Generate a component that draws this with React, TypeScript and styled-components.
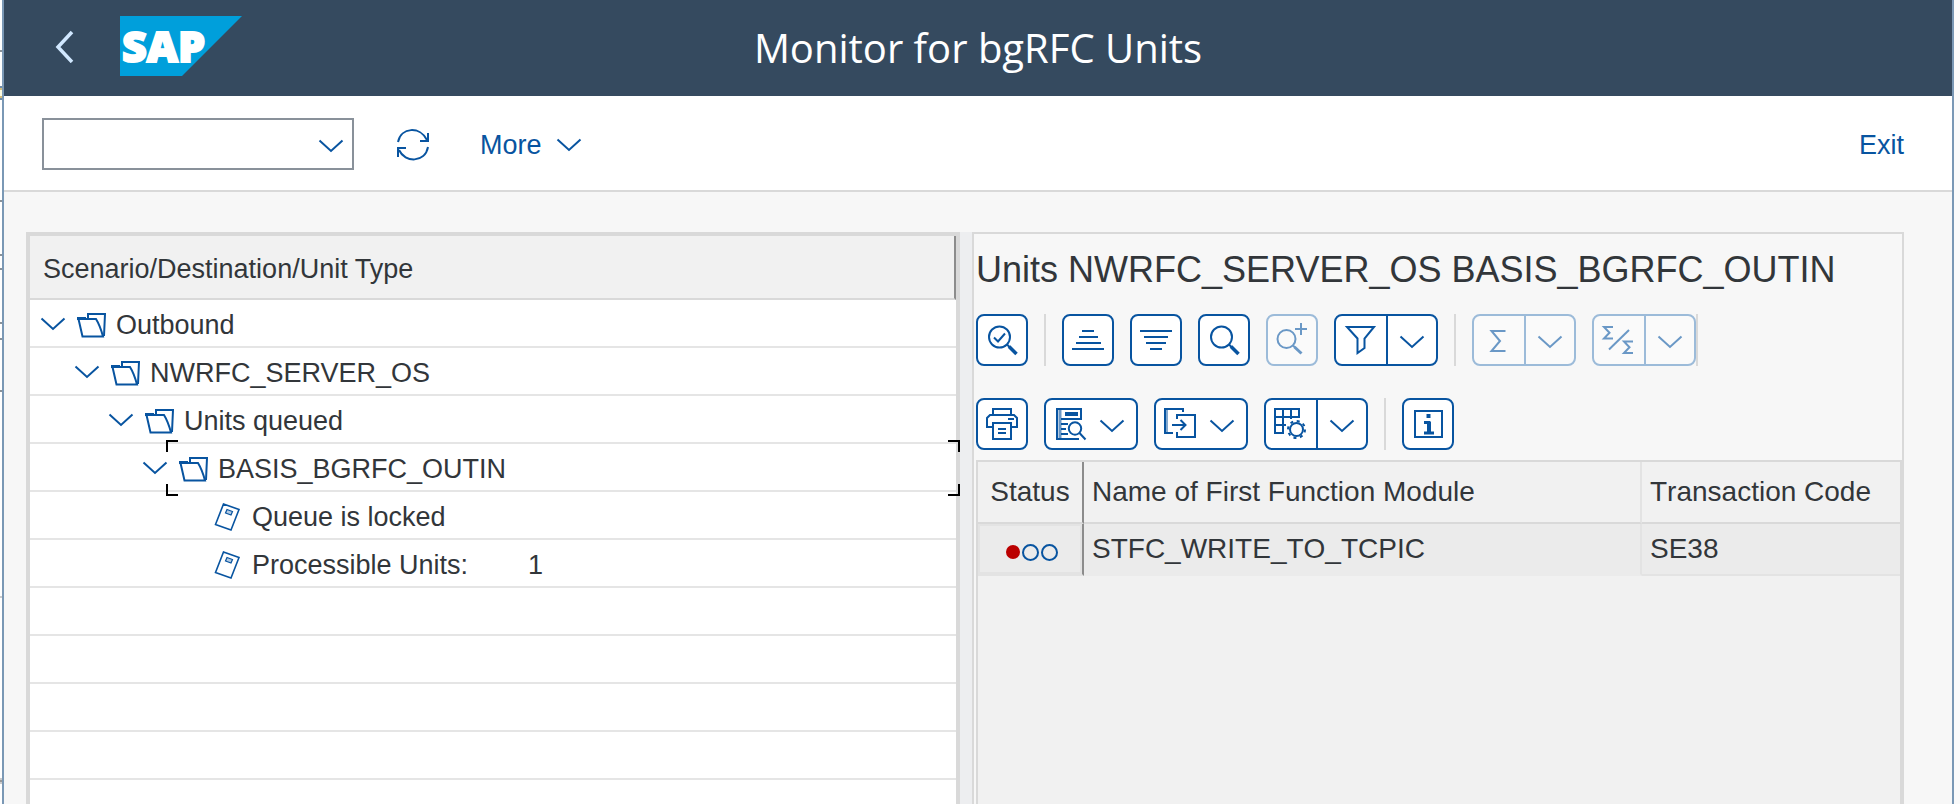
import React, { ReactNode } from 'react';
import styled, { createGlobalStyle } from 'styled-components';

const color = {
  shell: '#354a5f',
  link: '#0854a0',
  text: '#32363a',
  page: '#f7f7f7',
  line: '#d9d9d9',
  rowLine: '#e5e5e5',
  cellLine: '#e3e3e3',
  strongLine: '#8c8c8c',
  windowEdge: '#7a98b5',
  disabledEdge: '#9cbbd9',
  disabledIcon: '#6a98c6',
};

const GlobalStyle = createGlobalStyle`
  * { box-sizing: border-box; }
  body {
    margin: 0;
    background: #fafafa;
    color: ${color.text};
    font-family: "Liberation Sans", Arial, sans-serif;
  }
  button {
    margin: 0;
    padding: 0;
    border: 0;
    background: none;
    color: inherit;
    font: inherit;
    cursor: pointer;
  }
  svg { display: block; flex: none; }
`;

/* ---------- window frame ---------- */

/* A sliver of the window underneath stays visible along the left edge. */
const Desktop = styled.div`
  display: flex;
  height: 100vh;
  padding: 0 6px 0 2px;
  overflow: hidden;
  background:
    linear-gradient(
        #fff 50px, #8a9299 50px 52px, #fff 52px 86px, #6f8ba6 86px 88px, #d3bd7c 88px 90px,
        #fdfbe0 90px 96px, #d3bd7c 96px 98px, #6f8ba6 98px 100px, #fff 100px 200px,
        #8a9299 200px 202px, #fff 202px 254px, #8a9299 254px 256px, #fff 256px 268px,
        #8a9299 268px 270px, #fff 270px 322px, #8a9299 322px 324px, #fff 324px 338px,
        #8a9299 338px 340px, #fff 340px 390px, #8a9299 390px 392px, #fff 392px 596px,
        #ccc 596px 598px, #fff 598px 778px, #ccc 778px 780px, #999 780px 782px,
        #ccc 782px 784px, #fff 784px
      )
      left / 2px 100% no-repeat,
    #fafafa;
`;

const AppWindow = styled.div`
  flex: 1;
  min-width: 0;
  display: flex;
  flex-direction: column;
  border: solid ${color.windowEdge};
  border-width: 0 2px;
  background: ${color.page};
`;

const ShellBar = styled.header`
  flex: none;
  display: grid;
  grid-template-columns: 1fr auto 1fr;
  align-items: center;
  height: 96px;
  padding: 0 48px;
  background: ${color.shell};
  color: #fff;
`;

const ShellStart = styled.div`
  display: flex;
  align-items: center;
  gap: 44px;
  padding-bottom: 4px;
`;

const BackButton = styled.button`
  display: flex;
  color: #d1e8ff;
`;

const ShellTitle = styled.h1`
  margin: 0;
  font: 400 40px/56px "Open Sans", "Noto Sans", sans-serif;
  white-space: nowrap;
`;

const LogoText = styled.text`
  fill: #fff;
  stroke: #fff;
  stroke-width: 2px;
  font: 800 43px "Open Sans", sans-serif;
`;

/* ---------- menu bar ---------- */

const MenuBar = styled.nav`
  flex: none;
  display: flex;
  align-items: center;
  padding: 22px 48px 20px 38px;
  border-bottom: 2px solid ${color.line};
  background: #fff;
  color: ${color.link};
  font-size: 27px;
  line-height: 32px;
`;

const CommandField = styled.label`
  position: relative;
  width: 312px;
`;

const CommandSelect = styled.select`
  display: block;
  width: 100%;
  height: 52px;
  padding: 0 48px 0 12px;
  border: 2px solid #89919a;
  border-radius: 0;
  background: #fff;
  color: ${color.text};
  font: inherit;
  appearance: none;
`;

const SelectArrow = styled.span`
  position: absolute;
  top: 21px;
  right: 10px;
  pointer-events: none;
`;

const MenuButton = styled.button`
  display: flex;
  align-items: center;
  gap: 14px;
  padding-top: 2px;
`;

const RefreshButton = styled(MenuButton)`
  margin-left: 42px;
`;

const MoreButton = styled(MenuButton)`
  margin-left: 50px;
`;

const ExitButton = styled(MenuButton)`
  margin-left: auto;
`;

/* ---------- work area ---------- */

const Work = styled.main`
  flex: 1;
  min-height: 0;
  display: grid;
  grid-template-columns: minmax(0, 934fr) 12px minmax(0, 932fr);
  grid-template-rows: minmax(0, 1fr);
  padding: 40px 48px 0 22px;
`;

const Splitter = styled.div`
  background: #edeef0;
`;

const TreePanel = styled.section`
  border: 4px solid ${color.line};
  border-bottom: 0;
  background: #fff;
  font-size: 27px;
  line-height: 32px;
`;

const TreeHeader = styled.h2`
  height: 64px;
  margin: 0;
  padding: 17px 13px 0;
  border-right: 2px solid ${color.strongLine};
  border-bottom: 2px solid ${color.line};
  background: #f1f1f1;
  font: inherit;
`;

const TreeList = styled.ul`
  margin: 0;
  padding: 0;
  list-style: none;
`;

const TreeRow = styled.li<{ $level?: number }>`
  position: relative;
  display: flex;
  align-items: center;
  gap: 10px;
  height: 48px;
  padding-top: 4px;
  padding-left: ${({ $level = 0 }) => 10 + $level * 34}px;
  border-bottom: 2px solid ${color.rowLine};
  white-space: nowrap;
`;

const ToggleSlot = styled.span`
  display: flex;
  width: 26px;
  margin-bottom: 2px;
  color: ${color.link};
`;

const NodeIcon = styled.span`
  display: flex;
  width: 30px;
  color: ${color.link};
`;

const NodeCount = styled.span`
  margin-left: 50px;
`;

const corner = (pos: string) => `linear-gradient(#000, #000) ${pos} / 12px 2px no-repeat,
  linear-gradient(#000, #000) ${pos} / 2px 12px no-repeat`;

const FocusFrame = styled.span`
  position: absolute;
  inset: -4px -4px -6px 136px;
  z-index: 1;
  pointer-events: none;
  background: ${['left top', 'right top', 'left bottom', 'right bottom'].map(corner).join(',')};
`;

/* ---------- unit list ---------- */

const UnitPanel = styled.section`
  display: flex;
  flex-direction: column;
  border: 2px solid ${color.line};
  border-bottom: 0;
  padding-left: 2px;
`;

const UnitTitle = styled.h2`
  margin: 16px 0 24px;
  font-size: 36px;
  font-weight: 400;
  line-height: 40px;
  white-space: nowrap;
`;

const Tools = styled.div`
  display: flex;
  flex-direction: column;
  gap: 32px;
  margin-bottom: 10px;
`;

const ToolRow = styled.div`
  display: flex;
  gap: 16px;
`;

const ToolSeparator = styled.span<{ $flush?: boolean }>`
  width: 2px;
  margin-left: ${({ $flush }) => ($flush ? '-16px' : '0')};
  background: ${color.line};
`;

const ToolFrame = styled.div<{ $disabled?: boolean }>`
  display: flex;
  height: 52px;
  border: 2px solid ${({ $disabled }) => ($disabled ? color.disabledEdge : color.link)};
  border-radius: 8px;
  background: ${({ $disabled }) => ($disabled ? '#fafafa' : '#fff')};
  color: ${({ $disabled }) => ($disabled ? color.disabledIcon : color.link)};
`;

const ToolButton = styled.button`
  display: flex;
  align-items: center;
`;

const MenuPart = styled.button`
  display: flex;
  align-items: center;
  justify-content: center;
  width: 50px;
  padding-top: 4px;
  border-left: 2px solid ${color.link};

  &:disabled { border-color: ${color.disabledEdge}; }
`;

const SplitMain = styled(ToolButton)`
  width: 50px;
`;

const InlineArrow = styled.span`
  display: flex;
  justify-content: center;
  width: 36px;
  margin-right: 6px;
  padding-top: 4px;
`;

const TableArea = styled.div`
  flex: 1;
  border: 2px solid ${color.line};
  border-bottom: 0;
  background: #f1f1f1;
`;

const UnitTable = styled.table`
  width: 100%;
  border-spacing: 0;
  table-layout: fixed;
  font-size: 28px;
  line-height: 32px;
  font-kerning: none;
  white-space: nowrap;
`;

const StatusCol = styled.col`
  width: 106px;
`;

const CodeCol = styled.col`
  width: 258px;
`;

type Edge = 'strong' | 'soft';

const edgeBorder = ({ $edge }: { $edge?: Edge }) =>
  $edge ? `2px solid ${$edge === 'strong' ? color.strongLine : color.cellLine}` : '0';

const HeadCell = styled.th<{ $edge?: Edge }>`
  height: 62px;
  padding: 0 8px;
  border-right: ${edgeBorder};
  border-bottom: 2px solid ${color.line};
  font-weight: 400;
  text-align: ${({ $edge }) => ($edge === 'strong' ? 'center' : 'left')};
`;

const Cell = styled.td<{ $edge?: Edge }>`
  height: 52px;
  padding: 0 8px;
  border-right: ${edgeBorder};
  border-bottom: 2px solid ${({ $edge }) => ($edge === 'soft' ? '#ebebeb' : color.cellLine)};
  background: #ebebeb;
`;

const StatusCell = styled(Cell)`
  padding: 0;
  box-shadow: inset 0 0 0 2px ${color.cellLine};
`;

const Lights = styled.span`
  display: flex;
  align-items: center;
  justify-content: center;
  gap: 2px;
  padding: 6px 0 0 4px;
`;

const Light = styled.i<{ $on?: boolean }>`
  width: ${({ $on }) => ($on ? 14 : 17)}px;
  height: ${({ $on }) => ($on ? 14 : 17)}px;
  border: 2px solid ${({ $on }) => ($on ? '#bb0000' : color.link)};
  border-radius: 50%;
  background: ${({ $on }) => ($on ? '#bb0000' : 'transparent')};
`;

/* ---------- icons ---------- */

const Chevron = () => (
  <svg width="26" height="14" viewBox="0 0 26 14" fill="none" stroke="currentColor" strokeWidth="2" aria-hidden="true">
    <path d="M1.500 1.500 13 12 24.500 1.500" />
  </svg>
);

const Glyph = ({ children }: { children: ReactNode }) => (
  <svg width="48" height="48" viewBox="2 2 48 48" fill="none" stroke="currentColor" strokeWidth="2" aria-hidden="true">
    {children}
  </svg>
);

const Logo = () => (
  <svg width="122" height="60" viewBox="0 0 122 60" overflow="visible" role="img" aria-label="SAP">
    <path d="M0 0H122L62 60H0Z" fill="#009fdb" />
    <LogoText x="2" y="46">SAP</LogoText>
  </svg>
);

const Folder = () => (
  <svg width="30" height="26" viewBox="0 0 30 26" fill="none" stroke="currentColor" strokeWidth="2" aria-hidden="true">
    <path d="M12 6V2H29L28 24" />
    <path d="M2.500 7H20C22.500 11 25 17 27 24.500H6.500Z" />
    <path d="M1 6.500H10" strokeWidth="3" />
  </svg>
);

const Tag = () => (
  <svg width="30" height="30" viewBox="0 0 30 30" fill="none" stroke="currentColor" strokeWidth="1.600" aria-hidden="true">
    <path d="M11.500 2 27 7.500 19 28 3.500 22.500Z" />
    <path d="M15 7.500 20.500 9.500 19 13 13.500 11Z" strokeWidth="1.200" fill="currentColor" fillOpacity=".3" />
  </svg>
);

const Lens = () => (
  <>
    <circle cx="23.500" cy="23" r="10.500" />
    <path d="M31 30.500 34 33.500" />
    <path d="M33 32.500 40.500 40" strokeWidth="3.500" />
  </>
);

const icons = {
  details: (
    <>
      <Lens />
      <path d="M18 23.500 22 27.500 29 19.500" />
    </>
  ),
  ascending: <path d="M20 17H32M17 23H36M14 29H39M10 35H42" />,
  descending: <path d="M10 17H42M14 23H38M16 29H36M20 35H32" />,
  find: <Lens />,
  findNext: (
    <>
      <circle cx="20.500" cy="25" r="9" />
      <path d="M27 31.500 29 33.500M35 9V21M29 15H41" />
      <path d="M28.500 33 35.500 39.500" strokeWidth="3" />
    </>
  ),
  filter: <path d="M13 13H40L30.500 24.500V34L23.500 39V24.500Z" />,
  sum: <path d="M33.500 17H19.500L28 27 19.500 37H33.500" />,
  subtotal: (
    <>
      <path d="M17 35.500 37 16" />
      <path d="M21 13H12L17.500 18.800 12 24.500H21M41 27.500H32L37.500 33.300 32 39H41" />
    </>
  ),
  print: (
    <>
      <path d="M17 17V11H35V17" />
      <path d="M17 29H11V20L14 17H38L41 20V29H35M32 21H38" />
      <path d="M17 25H35V41H17ZM22 31H30M22 35H30" />
    </>
  ),
  view: (
    <>
      <path d="M35 41H13V11H37V21H17M17 26H24M17 31H22M17 36H24" />
      <path d="M16 11V41" strokeOpacity=".6" strokeWidth="3" />
      <path d="M21 16H34" strokeWidth="4" />
      <circle cx="31" cy="30.500" r="6.200" />
      <path d="M35.500 35 41.500 41.500" />
    </>
  ),
  exportList: (
    <>
      <path d="M29 14V11H11V35H19M23 21V17H41V39H23V34" />
      <path d="M13 11V35" strokeOpacity=".5" />
      <path d="M18 27H31M26.500 22 31.500 27 26.500 32" />
    </>
  ),
  layout: (
    <>
      <path d="M20 35H11V11H35V20M11 19H35M11 27H22M19 11V35M27 11V21" />
      <circle cx="32.500" cy="31.500" r="6.500" />
      <circle cx="32.500" cy="31.500" r="8.500" strokeDasharray="3 3.670" />
    </>
  ),
  info: (
    <>
      <path d="M13 13H40V39H13Z" />
      <path d="M24.500 18H28.500" strokeWidth="4" />
      <path d="M22 24.500H28M22 35H32" strokeWidth="3" />
      <path d="M27 23.500V35" strokeWidth="4" />
    </>
  ),
};

type IconName = keyof typeof icons;

/* ---------- toolbar parts ---------- */

interface ToolProps {
  icon: IconName;
  label: string;
  disabled?: boolean;
}

const Tool = ({ icon, label, disabled }: ToolProps) => (
  <ToolFrame $disabled={disabled}>
    <ToolButton aria-label={label} disabled={disabled}>
      <Glyph>{icons[icon]}</Glyph>
    </ToolButton>
  </ToolFrame>
);

const MenuTool = ({ icon, label }: ToolProps) => (
  <ToolFrame>
    <ToolButton aria-label={label} aria-haspopup="menu">
      <Glyph>{icons[icon]}</Glyph>
      <InlineArrow><Chevron /></InlineArrow>
    </ToolButton>
  </ToolFrame>
);

const SplitTool = ({ icon, label, disabled }: ToolProps) => (
  <ToolFrame $disabled={disabled}>
    <SplitMain aria-label={label} disabled={disabled}>
      <Glyph>{icons[icon]}</Glyph>
    </SplitMain>
    <MenuPart aria-label={`${label} options`} aria-haspopup="menu" disabled={disabled}>
      <Chevron />
    </MenuPart>
  </ToolFrame>
);

/* ---------- data ---------- */

interface TreeNode {
  label: string;
  level: number;
  leaf?: boolean;
  count?: number;
  focused?: boolean;
}

const nodes: TreeNode[] = [
  { label: 'Outbound', level: 0 },
  { label: 'NWRFC_SERVER_OS', level: 1 },
  { label: 'Units queued', level: 2 },
  { label: 'BASIS_BGRFC_OUTIN', level: 3, focused: true },
  { label: 'Queue is locked', level: 4, leaf: true },
  { label: 'Processible Units:', level: 4, leaf: true, count: 1 },
];

const emptyRows = [0, 1, 2, 3, 4];

export default function App() {
  return (
    <Desktop>
      <GlobalStyle />
      <AppWindow>
        <ShellBar>
          <ShellStart>
            <BackButton aria-label="Back">
              <svg width="24" height="34" viewBox="0 0 24 34" fill="none" stroke="currentColor" strokeWidth="3.500">
                <path d="M20 3 6 18 20 33" />
              </svg>
            </BackButton>
            <Logo />
          </ShellStart>
          <ShellTitle>Monitor for bgRFC Units</ShellTitle>
        </ShellBar>

        <MenuBar>
          <CommandField>
            <CommandSelect aria-label="Transaction code" defaultValue="">
              <option value="" />
            </CommandSelect>
            <SelectArrow><Chevron /></SelectArrow>
          </CommandField>
          <RefreshButton aria-label="Refresh">
            <svg width="34" height="32" viewBox="0 0 34 32" fill="none" stroke="currentColor" strokeWidth="2">
              <path d="M2 13C5 -2 24 -3 31 11M32 4V12H24" />
              <path d="M32 18C29 34 9 34 3 21M2 28V19H10" />
            </svg>
          </RefreshButton>
          <MoreButton aria-haspopup="menu">
            More
            <Chevron />
          </MoreButton>
          <ExitButton>Exit</ExitButton>
        </MenuBar>

        <Work>
          <TreePanel>
            <TreeHeader>Scenario/Destination/Unit Type</TreeHeader>
            <TreeList>
              {nodes.map((node) => (
                <TreeRow key={node.label} $level={node.level}>
                  {node.leaf ? (
                    <ToggleSlot />
                  ) : (
                    <ToggleSlot as="button" aria-label={`Collapse ${node.label}`}>
                      <Chevron />
                    </ToggleSlot>
                  )}
                  <NodeIcon>{node.leaf ? <Tag /> : <Folder />}</NodeIcon>
                  <span>{node.label}</span>
                  {node.count !== undefined && <NodeCount>{node.count}</NodeCount>}
                  {node.focused && <FocusFrame />}
                </TreeRow>
              ))}
              {emptyRows.map((row) => (
                <TreeRow key={row} />
              ))}
            </TreeList>
          </TreePanel>

          <Splitter />

          <UnitPanel>
            <UnitTitle>Units NWRFC_SERVER_OS BASIS_BGRFC_OUTIN</UnitTitle>
            <Tools>
              <ToolRow>
                <Tool icon="details" label="Details" />
                <ToolSeparator />
                <Tool icon="ascending" label="Sort ascending" />
                <Tool icon="descending" label="Sort descending" />
                <Tool icon="find" label="Find" />
                <Tool icon="findNext" label="Find next" disabled />
                <SplitTool icon="filter" label="Filter" />
                <ToolSeparator />
                <SplitTool icon="sum" label="Total" disabled />
                <SplitTool icon="subtotal" label="Subtotal" disabled />
                <ToolSeparator $flush />
              </ToolRow>
              <ToolRow>
                <Tool icon="print" label="Print" />
                <MenuTool icon="view" label="Views" />
                <MenuTool icon="exportList" label="Export" />
                <SplitTool icon="layout" label="Layout" />
                <ToolSeparator />
                <Tool icon="info" label="Information" />
              </ToolRow>
            </Tools>
            <TableArea>
              <UnitTable>
                <colgroup>
                  <StatusCol />
                  <col />
                  <CodeCol />
                </colgroup>
                <thead>
                  <tr>
                    <HeadCell $edge="strong">Status</HeadCell>
                    <HeadCell $edge="soft">Name of First Function Module</HeadCell>
                    <HeadCell>Transaction Code</HeadCell>
                  </tr>
                </thead>
                <tbody>
                  <tr>
                    <StatusCell $edge="strong">
                      <Lights role="img" aria-label="Red">
                        <Light $on />
                        <Light />
                        <Light />
                      </Lights>
                    </StatusCell>
                    <Cell $edge="soft">STFC_WRITE_TO_TCPIC</Cell>
                    <Cell>SE38</Cell>
                  </tr>
                </tbody>
              </UnitTable>
            </TableArea>
          </UnitPanel>
        </Work>
      </AppWindow>
    </Desktop>
  );
}
